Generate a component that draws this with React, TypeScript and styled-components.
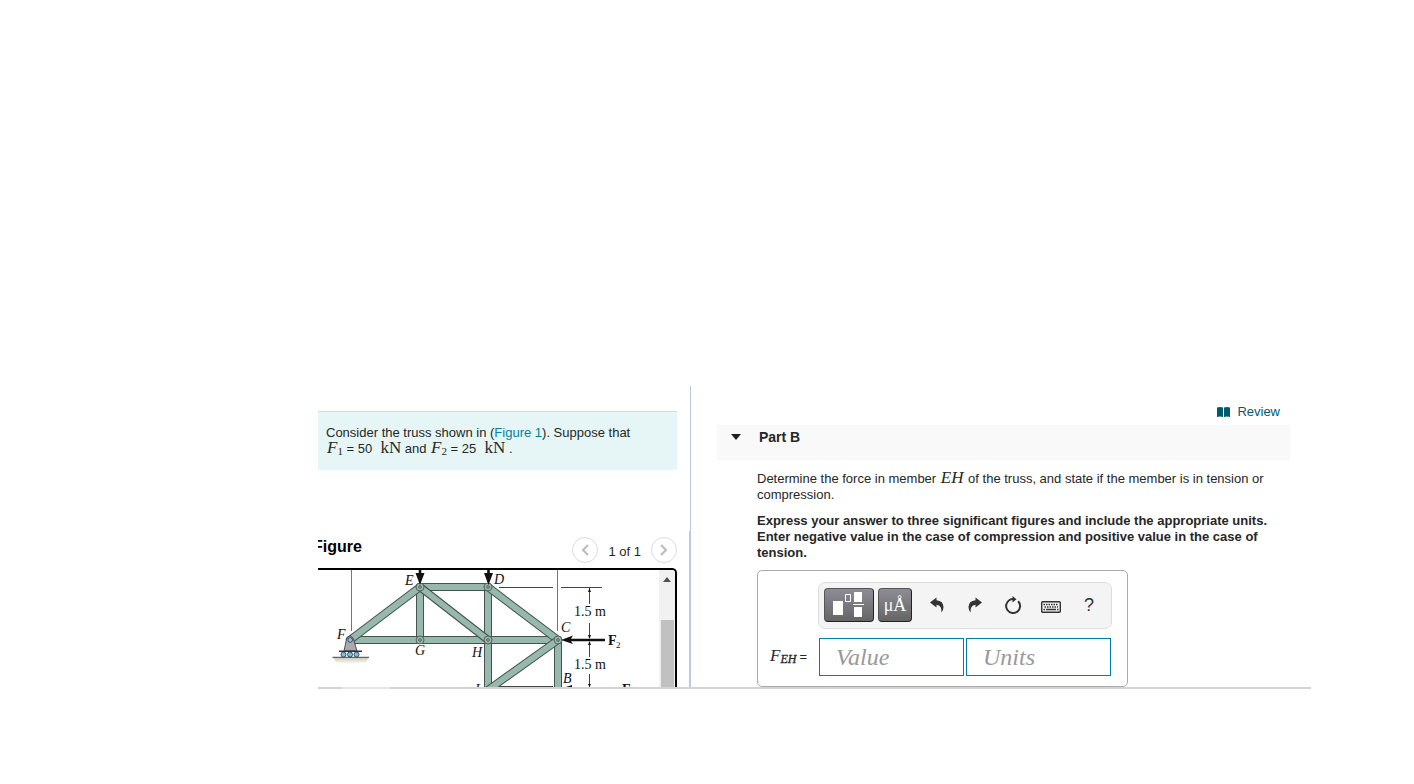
import React from 'react';
import styled, { createGlobalStyle } from 'styled-components';

const GlobalStyle = createGlobalStyle`
  * { box-sizing: border-box; }
  body { margin: 0; background: #fff; color: #262626; font: 13px/16px "Liberation Sans", Arial, sans-serif; }
  p, h2, h3 { margin: 0; }
  button { font: inherit; cursor: pointer; }
`;

const Page = styled.main`
  margin: 386px 103px 0 318px;
`;
const Columns = styled.div`
  display: grid;
  grid-template-columns: 373px minmax(0, 1fr);
`;
const Rule = styled.div`
  height: 2px;
  background: linear-gradient(to right, #d3d3d3 24px, #e6e6e6 24px, #e6e6e6 72px, #d3d3d3 72px);
`;

const Side = styled.section`
  display: flex;
  flex-direction: column;
  border-right: 1px solid #b9cde0;
  padding-top: 25px;
`;
const Prompt = styled.div`
  margin-right: 13px;
  margin-bottom: 61px;
  padding: 13px 8px;
  background: #e6f6f7;
  border-top: 1px solid #d5dddd;
`;
const Line = styled.p`
  height: 16px;
  white-space: nowrap;
`;
const Link = styled.a`
  color: #007fa3;
  text-decoration: none;
`;
const Math = styled.i<{ $upright?: boolean }>`
  margin-left: 1px;
  font-family: "Liberation Serif", "Times New Roman", serif;
  font-size: 17px;
  line-height: 14px;
  font-style: ${(p) => (p.$upright ? 'normal' : 'italic')};
  sub { font-size: 11px; font-style: normal; line-height: 0; vertical-align: -2px; }
`;
const MemberName = styled(Math)`
  margin-right: 1px;
`;
const LabelMath = styled(Math)`
  && { margin: 0 3px 0 0; }
  && sub { font-size: 12px; font-style: italic; -webkit-text-stroke: 0.3px; }
`;

const FigurePanel = styled.div`
  border-right: 1px solid #b9cde0;
  padding-right: 12px;
  flex: 1;
`;
const FigureHeader = styled.div`
  display: flex;
  align-items: center;
  justify-content: space-between;
  height: 37px;
  overflow: hidden;
`;
const FigureTitle = styled.h2`
  margin: 0 0 6px -5px;
  color: #000;
  font-size: 16px;
  line-height: 20px;
`;
const Pager = styled.div`
  display: flex;
  align-items: center;
  gap: 10px;
`;
const PageCount = styled.span`
  padding-top: 4px;
`;
const RoundButton = styled.button`
  display: grid;
  place-items: center;
  width: 26px;
  height: 26px;
  padding: 0;
  border: 1px solid #dcdcdc;
  border-radius: 50%;
  background: #fff;
`;
const Viewer = styled.div`
  display: flex;
  justify-content: space-between;
  border: solid #000;
  border-width: 2px 2px 0 0;
  border-radius: 0 5px 0 0;
  overflow: hidden;
`;
const Drawing = styled.svg`
  display: block;
  width: 341px;
  height: 117px;
  font-family: "Liberation Serif", "Times New Roman", serif;
  font-size: 14px;
  fill: #111;
`;
const Track = styled.div`
  display: flex;
  flex-direction: column;
  width: 16px;
  padding: 7px 1px 0 2px;
  background: #f1f1f1;
`;
const Thumb = styled.div`
  flex: 1;
  margin-top: 38px;
  background: #c1c1c1;
`;

const Main = styled.section`
  padding: 18px 21px 0 26px;
`;
const ReviewRow = styled.div`
  display: flex;
  justify-content: flex-end;
  padding: 0 10px 5px;
`;
const Review = styled.a`
  display: flex;
  align-items: center;
  gap: 7px;
  color: #005a70;
  text-decoration: none;
`;
const PartBar = styled.button`
  display: flex;
  align-items: center;
  gap: 18px;
  width: 100%;
  height: 35px;
  padding: 0 14px 11px 14px;
  border: 0;
  background: #f9f9f9;
  color: #262626;
  && { font-weight: bold; font-size: 14px; }
`;
const Body = styled.div`
  padding: 11px 20px 0 40px;
`;
const Question = styled.p`
  margin-bottom: 10px;
`;
const Instructions = styled.p`
  font-weight: bold;
`;
const AnswerBox = styled.form`
  width: 371px;
  margin-top: 9px;
  padding: 11px 15px 10px 12px;
  border: 1px solid #aaa;
  border-radius: 5px;
`;
const Toolbar = styled.div`
  display: flex;
  align-items: center;
  height: 47px;
  margin-left: 48px;
  margin-bottom: 9px;
  padding: 0 0 2px 5px;
  border: 1px solid #ddd;
  border-radius: 7px;
  background: #f4f4f4;
`;
const Palettes = styled.div`
  display: flex;
  gap: 4px;
  margin-right: 6px;
`;
const DarkButton = styled.button<{ $wide?: boolean }>`
  display: grid;
  place-items: center;
  width: ${(p) => (p.$wide ? 50 : 34)}px;
  height: 34px;
  padding: 0;
  border: 1px solid;
  border-color: #555 #222 #222 #555;
  border-radius: 4px;
  background: linear-gradient(#8e8c96, #656565);
  color: #fff;
  && { font: 18px/20px "Liberation Serif", serif; }
`;
const ToolButton = styled.button`
  display: grid;
  place-items: center;
  width: 38px;
  height: 34px;
  padding: 0;
  border: 0;
  background: none;
  color: #333;
  && { font-size: 18px; }
`;
const AnswerRow = styled.div`
  display: flex;
  align-items: center;
  padding-right: 1px;
`;
const AnswerLabel = styled.label`
  width: 49px;
  white-space: nowrap;
`;
const Field = styled.input`
  flex: 1;
  min-width: 0;
  height: 38px;
  padding: 0 16px;
  border: 1px solid #007fa3;
  border-radius: 0;
  background: #fff;
  font: italic 24px/28px "Liberation Serif", serif;
  & + & { margin-left: 2px; }
  &::placeholder { color: #999; opacity: 1; }
`;

type Pt = [number, number];
const F: Pt = [350, 640], G: Pt = [420, 640], H: Pt = [488, 640], C: Pt = [558, 640];
const E: Pt = [420, 587], D: Pt = [488, 587], I: Pt = [488, 690], B: Pt = [558, 694];
const members: [Pt, Pt][] = [[E, G], [D, H], [H, I], [C, B], [E, D], [F, C], [F, E], [E, H], [D, C], [C, I]];

const Truss = () => (
  <Drawing viewBox="318 570 341 117" role="img" aria-label="Truss">
    <defs>
      <linearGradient id="ground" x1="0" y1="0" x2="0" y2="1">
        <stop offset="0" stopColor="#c9c8b4" />
        <stop offset="1" stopColor="#fff" />
      </linearGradient>
    </defs>
    <g stroke="#777" strokeWidth="1">
      <path d="M351.500 570V631M557.500 570V631" />
      <path d="M499 587.500H553M561 587.500H602M589.500 588V604M589.500 623V638M589.500 642V657M589.500 674V687M496 686.500H553" stroke="#444" />
    </g>
    {members.map(([a, b], i) => (
      <g key={i} strokeLinecap="round">
        <path d={`M${a}L${b}`} stroke="#46524e" strokeWidth="8" />
        <path d={`M${a}L${b}`} stroke="#97b8ac" strokeWidth="6" />
      </g>
    ))}
    {[E, D, G, H, C].map(([x, y]) => (
      <g key={`${x}-${y}`}>
        <circle cx={x} cy={y} r="4" fill="#97b8ac" stroke="#46524e" strokeWidth=".8" />
        <circle cx={x} cy={y} r="1.300" fill="#c5d4ce" stroke="#333" strokeWidth=".8" />
      </g>
    ))}
    <path d="M333 657.500H369L366 662Q350 666 336 662Z" fill="url(#ground)" />
    <path d="M332.500 657.300H369" stroke="#444" />
    <path d="M344 651L346.500 639Q350 633 353.500 639L357 651Z" fill="#aaa9ad" stroke="#444" strokeWidth=".9" />
    <circle cx="350.200" cy="640" r="2.300" fill="#8ec9e6" stroke="#234" strokeWidth=".8" />
    <path d="M339 651.300H362" stroke="#333" strokeWidth="1.600" />
    {[343.5, 350, 356.5].map((x) => (
      <circle key={x} cx={x} cy="654.500" r="2.500" fill="#79bfe2" stroke="#234" strokeWidth=".8" />
    ))}
    <path d="M418.700 570H421.300V573H424.500L420 585L415.500 573H418.700ZM487.200 570H489.800V573H493L488.500 585L484 573H487.200Z" />
    <path d="M561 640L573 635.500L571 638.700H605V641.300H571L573 644Z" />
    <path d="M589.500 588L591 592H588ZM589.500 639L591 635H588ZM589.500 641L591 645H588ZM589.500 687L591 684H588ZM566 687L572 685V687Z" />
    <g fontStyle="italic">
      <text x="405" y="585">E</text>
      <text x="494" y="584">D</text>
      <text x="337" y="639">F</text>
      <text x="415" y="655">G</text>
      <text x="472" y="657">H</text>
      <text x="561" y="632">C</text>
      <text x="563" y="683">B</text>
      <text x="475" y="694">I</text>
    </g>
    <text x="574" y="616">1.5 m</text>
    <text x="574" y="669">1.5 m</text>
    <text x="608" y="645" fontWeight="bold">F</text>
    <text x="616" y="648" fontSize="9">2</text>
    <text x="622" y="694" fontWeight="bold">F</text>
  </Drawing>
);

const Chevron = ({ d }: { d: string }) => (
  <svg width="10" height="14" viewBox="0 0 10 14" fill="none" stroke="#bbb" strokeWidth="2"><path d={d} /></svg>
);
const undoPath = 'M0 5.500L6.500 .5V3.200Q13.500 4 13.500 10Q13.500 13 11.500 15.500Q12 8.500 6.500 7.800V10.500Z';

export default function App() {
  return (
    <>
      <GlobalStyle />
      <Page>
        <Columns>
          <Side>
            <Prompt>
              <Line>Consider the truss shown in (<Link href="#figure">Figure 1</Link>). Suppose that</Line>
              <Line>
                <Math>F<sub>1</sub></Math> = 50 &nbsp;<Math $upright>kN</Math> and <Math>F<sub>2</sub></Math> = 25 &nbsp;<Math $upright>kN</Math> .
              </Line>
            </Prompt>
            <FigurePanel id="figure">
              <FigureHeader>
                <FigureTitle>Figure</FigureTitle>
                <Pager>
                  <RoundButton aria-label="Previous figure"><Chevron d="M8 2L3 7L8 12" /></RoundButton>
                  <PageCount>1 of 1</PageCount>
                  <RoundButton aria-label="Next figure"><Chevron d="M2 2L7 7L2 12" /></RoundButton>
                </Pager>
              </FigureHeader>
              <Viewer>
                <Truss />
                <Track>
                  <svg width="12" height="5" viewBox="0 0 12 5" fill="#505050"><path d="M2 5L6 0L10 5Z" /></svg>
                  <Thumb />
                </Track>
              </Viewer>
            </FigurePanel>
          </Side>
          <Main>
            <ReviewRow>
              <Review href="#review">
                <svg width="13" height="10" viewBox="0 0 13 10" fill="#005a70">
                  <path d="M0 .5Q3-.4 6 .5V10Q3 9.200 0 10ZM7 .5Q10-.4 13 .5V10Q10 9.200 7 10Z" />
                </svg>
                Review
              </Review>
            </ReviewRow>
            <PartBar aria-expanded="true">
              <svg width="10" height="6" viewBox="0 0 10 6" fill="#222"><path d="M0 0H10L5 6Z" /></svg>
              Part B
            </PartBar>
            <Body>
              <Question>
                Determine the force in member <MemberName>EH</MemberName> of the truss, and state if the member is in tension or compression.
              </Question>
              <Instructions>
                Express your answer to three significant figures and include the appropriate units. Enter negative value in the case of compression and positive value in the case of tension.
              </Instructions>
              <AnswerBox>
                <Toolbar>
                  <Palettes>
                    <DarkButton type="button" $wide aria-label="Templates">
                      <svg width="32" height="26" viewBox="0 0 32 26" fill="#fff">
                        <path d="M0 9H10V23H0ZM21 0H29V10H21ZM20 12H31V13H20ZM21 15H29V25H21Z" />
                        <path d="M12.500 2.500H17.500V9.500H12.500Z" fill="none" stroke="#fff" />
                      </svg>
                    </DarkButton>
                    <DarkButton type="button" aria-label="Symbols">μÅ</DarkButton>
                  </Palettes>
                  <ToolButton type="button" aria-label="Undo">
                    <svg width="14" height="16" viewBox="0 0 14 16" fill="#333"><path d={undoPath} /></svg>
                  </ToolButton>
                  <ToolButton type="button" aria-label="Redo">
                    <svg width="14" height="16" viewBox="0 0 14 16" fill="#333"><path d={undoPath} transform="matrix(-1 0 0 1 14 0)" /></svg>
                  </ToolButton>
                  <ToolButton type="button" aria-label="Reset">
                    <svg width="18" height="18" viewBox="0 0 18 18" fill="none" stroke="#333" strokeWidth="2">
                      <path d="M14.200 5.200A7 7 0 1 1 5.500 4Q7.500 2.800 10 3" /><path d="M8.500 0L12.500 3.200L8.500 6.500Z" fill="#333" stroke="none" />
                    </svg>
                  </ToolButton>
                  <ToolButton type="button" aria-label="Keyboard shortcuts">
                    <svg width="20" height="16" viewBox="0 -4 20 16" fill="none" stroke="#333">
                      <rect x=".7" y=".7" width="18.600" height="10.600" rx="1" strokeWidth="1.400" />
                      <path d="M2.500 3.500H17.500M3.500 6H17" strokeWidth="1.500" strokeDasharray="1.500 1" />
                      <path d="M2.500 8.500H4M5 8.500H15M16 8.500H17.500" strokeWidth="1.500" />
                    </svg>
                  </ToolButton>
                  <ToolButton type="button" aria-label="Help">?</ToolButton>
                </Toolbar>
                <AnswerRow>
                  <AnswerLabel htmlFor="value"><LabelMath>F<sub>EH</sub></LabelMath>=</AnswerLabel>
                  <Field id="value" placeholder="Value" />
                  <Field aria-label="Units" placeholder="Units" />
                </AnswerRow>
              </AnswerBox>
            </Body>
          </Main>
        </Columns>
        <Rule />
      </Page>
    </>
  );
}
